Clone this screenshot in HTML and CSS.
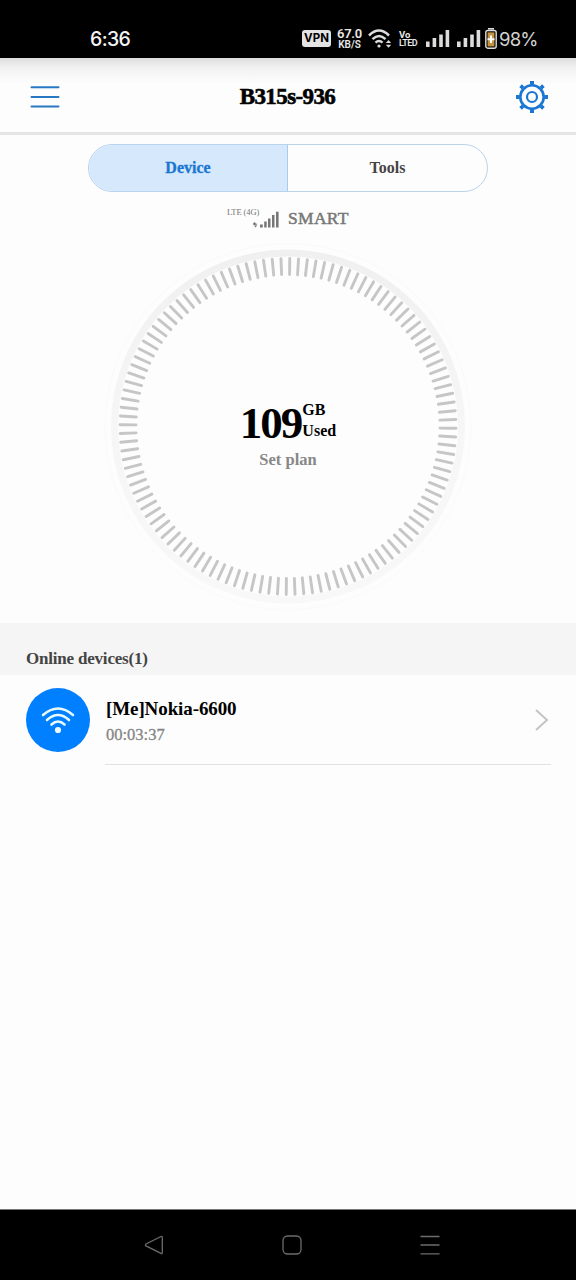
FILE: index.html
```html
<!DOCTYPE html>
<html lang="en">
<head>
<meta charset="utf-8">
<title>B315s-936</title>
<link rel="stylesheet" href="styles.css">
</head>
<body>
<div class="screen">
  <div class="status">
    <span class="clock">6:36</span>
    <div class="status-right">
      <span class="vpn">VPN</span>
      <span class="speed"><b class="rate">67.0</b><b class="unit">KB/S</b></span>
      <svg class="wifi" width="24" height="20" viewBox="0 0 24 20" fill="none" stroke="#dcdcdc" stroke-width="2.500">
        <path d="M1 6.5Q11 -3.500 21 6.500M4.500 10.200Q11 3.800 17.500 10.200M7.500 13.700Q11 10.300 14.500 13.700"/>
        <circle cx="11" cy="17" r="1.600" fill="#dcdcdc" stroke="none"/>
        <path d="M17.800 14l2.700-3 2.700 3zM17.800 15.800l2.700 3 2.700-3z" fill="#dcdcdc" stroke="none"/>
      </svg>
      <span class="volte"><b class="vo">Vo</b><b class="lte">LTED</b></span>
      <svg class="bars" width="24" height="18" viewBox="0 0 24 18" fill="#dcdcdc"><path d="M0 11.500h3.600V17H0zM6.600 8h3.600v9H6.600zM13.200 4.500h3.600V17h-3.600zM19.600 0h3.600v17h-3.600z"/></svg>
      <svg class="bars bars-two" width="24" height="18" viewBox="0 0 24 18" fill="#dcdcdc"><path d="M0 11.500h3.600V17H0zM6.600 8h3.600v9H6.600zM13.200 4.500h3.600V17h-3.600zM19.600 0h3.600v17h-3.600z"/></svg>
      <svg class="battery" width="12" height="21" viewBox="0 0 12 21"><path d="M3 .8h6" stroke="#ddd" stroke-width="1.600"/><rect x=".8" y="2.500" width="10.400" height="17.700" rx="2" fill="#110c02" stroke="#ddd" stroke-width="1.400"/><rect x="2.600" y="4.400" width="6.800" height="14" fill="#c39542"/><path d="M6 7.500v7.500M2.500 11.300h7" stroke="#fff" stroke-width="2"/></svg>
      <span class="percent">98%</span>
    </div>
  </div>

  <header class="header">
    <svg class="menu" width="30" height="24" viewBox="0 0 30 24" stroke="#2878c4" stroke-width="2" stroke-linecap="round"><path d="M1.500 2.300h27M1.500 12h27M1.500 21.600h27"/></svg>
    <h1 class="title">B315s-936</h1>
    <svg class="gear" width="34" height="34" viewBox="-17 -17 34 34" fill="none" stroke="#1976d2">
      <circle r="11.700" stroke-width="2.600"/><circle r="5" stroke-width="2.200"/>
      <path d="M0-12.500V-16M0 12.500V16M-12.500 0H-16M12.500 0H16" stroke-width="4"/>
      <path d="M-9-9l-2.400-2.400M9-9l2.400-2.400M-9 9l-2.400 2.400M9 9l2.400 2.400" stroke-width="3.800"/>
    </svg>
  </header>

  <main class="content">
    <div class="tabs"><div class="tab active"><span class="t-device">Device</span></div><div class="tab"><span class="t-tools">Tools</span></div></div>
    <div class="network">
      <span class="lte-label">LTE (4G)</span>
      <svg class="signal" width="28" height="18" viewBox="0 0 28 18" fill="#777"><path d="M.5 13.200l2-2.300 2 2.300zM1.500 14l2 2.500 2-2.500zM1.500 12.500h1.500v2H1.500zM3.200 12.500h1.500v2H3.200zM8 13.500h2.800v3H8zM12.200 10.500h2.500v6h-2.500zM16 7.500h2.500v9H16zM20 4h2.500v12.500H20zM24 .8h2.600v15.700H24z"/></svg>
      <span class="carrier">SMART</span>
    </div>
    <div class="dial">
      <svg class="ring" viewBox="-184 -184.500 368 368">
        <defs><linearGradient id="rim" x1="0" y1="0" x2="0" y2="1"><stop offset="0" stop-color="#f0f0f0"/><stop offset=".5" stop-color="#f6f6f6"/><stop offset="1" stop-color="#f8f8f8"/></linearGradient></defs>
        <circle r="183" fill="none" stroke="#fafafa"/>
        <circle r="173.500" fill="none" stroke="url(#rim)" stroke-width="7"/>
        <g id="ticks" stroke="#c6c6c6" stroke-width="2.900" stroke-linecap="round"></g>
      </svg>
      <div class="usage">
        <div class="amount"><span class="number">109</span><span class="units"><span class="gb">GB</span><span class="used">Used</span></span></div>
        <div class="plan">Set plan</div>
      </div>
    </div>
    <h2 class="section"><span>Online devices(1)</span></h2>
    <div class="device">
      <svg class="avatar" width="64" height="64" viewBox="0 0 64 64"><circle cx="32" cy="32" r="32" fill="#007fff"/><g fill="none" stroke="#e6fbff" stroke-width="2.600" stroke-linecap="round"><path d="M17 27Q32 14 47 27M21 32Q32 22 43 32M25.500 36.500Q32 30.500 38.500 36.500"/></g><circle cx="32" cy="42" r="3.100" fill="#effcff"/></svg>
      <div class="device-body">
        <div class="device-text"><div class="name">[Me]Nokia-6600</div><div class="time">00:03:37</div></div>
        <svg class="chevron" width="14" height="24" viewBox="0 0 14 24" fill="none" stroke="#c4c4c4" stroke-width="2"><path d="M1 2l11 10L1 22"/></svg>
      </div>
    </div>
  </main>

  <nav class="nav">
    <svg width="20" height="20" viewBox="0 0 20 20"><path d="M17 1.500L2 9q-1.200.9 0 1.900L17 18.400q1.300.5 1.300-.9V2.400q0-1.400-1.300-.9z"/></svg>
    <svg width="20" height="20" viewBox="0 0 20 20"><rect x="1" y="1" width="18" height="18" rx="4.500"/></svg>
    <svg width="20" height="20" viewBox="0 0 20 20"><path d="M.5 1.500h19M.5 10h19M.5 18.800h19"/></svg>
  </nav>
</div>
<script src="ticks.js"></script>
</body>
</html>
```

FILE: styles.css
```css
* { box-sizing: border-box; }
body { margin: 0; background: #fdfdfd; font-family: "Liberation Serif", serif; }
h1, h2 { margin: 0; }
svg { display: block; flex: none; }
span { white-space: nowrap; }
.screen { width: 576px; height: 1280px; display: flex; flex-direction: column; overflow: hidden; }

.status { height: 58px; flex: none; background: #000; color: #e8e8e8; display: flex; justify-content: space-between; padding: 18px 39px 0 90px; font-family: Inter, Roboto, sans-serif; }
.clock { font-size: 19.5px; line-height: 42px; height: 42px; color: #f4f4f4; font-weight: 500; letter-spacing: -0.6px; }
.status-right { display: flex; align-items: center; height: 41px; width: 235px; }
.status-right > * { flex: none; }
.vpn { width: 29px; height: 17px; margin-right: 6px; background: #e4e4e4; color: #000; border-radius: 3px; font-size: 11.5px; line-height: 17px; font-weight: 700; text-align: center; }
.speed { width: 25px; display: flex; flex-direction: column; align-items: center; margin-right: 6px; }
.rate { font-family: Roboto, sans-serif; font-size: 13px; line-height: 12px; font-weight: 600; letter-spacing: -0.2px; }
.unit { font-family: Roboto, sans-serif; font-size: 10px; line-height: 9px; font-weight: 600; }
.wifi { margin-right: 7px; }
.volte { width: 19px; display: flex; flex-direction: column; margin-right: 8px; font-family: Roboto, sans-serif; }
.vo { font-size: 9.5px; line-height: 9px; font-weight: 700; }
.lte { font-size: 9px; line-height: 9px; font-weight: 600; letter-spacing: -0.6px; }
.bars-two { margin-left: 7px; }
.battery { margin-left: 4px; }
.percent { font-size: 18.5px; letter-spacing: -0.8px; margin-left: 2px; color: #d2d2d2; }

.header { height: 77px; flex: none; display: flex; align-items: center; justify-content: space-between; padding: 3px 27px 0 30px; background: linear-gradient(#dedede, #f2f2f2 10px, #fdfdfd 26px); border-bottom: 3px solid #e5e5e5; }
.title { color: #000; font-size: 23px; line-height: 28px; letter-spacing: -0.6px; -webkit-text-stroke: .6px #000; }

.content { flex: 1; display: flex; flex-direction: column; }
.tabs { width: 400px; height: 48px; margin: 9px auto 0; display: flex; flex: none; border: 1.5px solid #b9d3ec; border-radius: 24px; overflow: hidden; }
.tab { width: 199px; flex: none; display: flex; align-items: center; justify-content: center; color: #444; font-size: 16px; font-weight: 700; }
.active { background: #d6e8fc; border-right: 1px solid #a9cbed; color: #1976d2; -webkit-text-stroke: .3px #1976d2; }
.network { height: 34px; flex: none; display: flex; padding: 15px 0 0 227px; color: #777; }
.lte-label { width: 32px; font-size: 8.5px; line-height: 11px; letter-spacing: -0.1px; }
.signal { margin: 4px 0 0 -7px; }
.carrier { margin-left: 8px; font-size: 17.5px; line-height: 22px; letter-spacing: .3px; -webkit-text-stroke: .5px #777; }
.dial { width: 368px; height: 368px; margin: 16px auto 0; flex: none; display: grid; place-items: center; }
.ring, .usage { grid-area: 1 / 1; }
.ring { width: 368px; height: 368px; }
.usage { display: flex; flex-direction: column; align-items: center; padding-top: 16px; }
.amount { display: flex; align-items: flex-start; color: #000; }
.number { font-size: 45px; line-height: 48px; font-weight: 700; letter-spacing: -2px; }
.units { display: flex; flex-direction: column; margin-left: 1px; font-size: 16px; line-height: 21px; font-weight: 700; }
.plan { margin-top: 3px; font-size: 16.5px; line-height: 20px; font-weight: 700; color: #888; }
.section { height: 52px; flex: none; margin-top: 12.5px; padding: 26px 0 0 26px; background: #f5f5f5; color: #444; font-size: 17px; line-height: 20px; letter-spacing: -0.2px; }
.device { height: 90px; flex: none; display: flex; padding: 13px 25px 0 26px; }
.device-body { flex: 1; margin-left: 15px; display: flex; align-items: flex-start; justify-content: space-between; height: 77px; padding: 8px 2px 0 1px; border-bottom: 1px solid #e1e1e1; }
.name { font-size: 19px; line-height: 26px; font-weight: 700; color: #000; letter-spacing: -0.1px; }
.time { font-size: 16.5px; line-height: 25px; color: #858585; -webkit-text-stroke: .3px #858585; }
.chevron { margin-top: 12px; }

.nav { height: 71px; flex: none; display: flex; gap: 118px; padding: 25px 0 0 144px; border-top: 1px solid #777; background: #000; }
.nav svg { fill: none; stroke: #6c6c6c; stroke-width: 1.300; }
```

FILE: ticks.js
```js
const ticks = document.getElementById("ticks");
for (let i = 0; i < 120; i++) {
  const line = document.createElementNS("http://www.w3.org/2000/svg", "line");
  line.setAttribute("y1", -168);
  line.setAttribute("y2", -152);
  line.setAttribute("transform", `rotate(${i * 3 + 0.6})`);
  ticks.appendChild(line);
}
```
